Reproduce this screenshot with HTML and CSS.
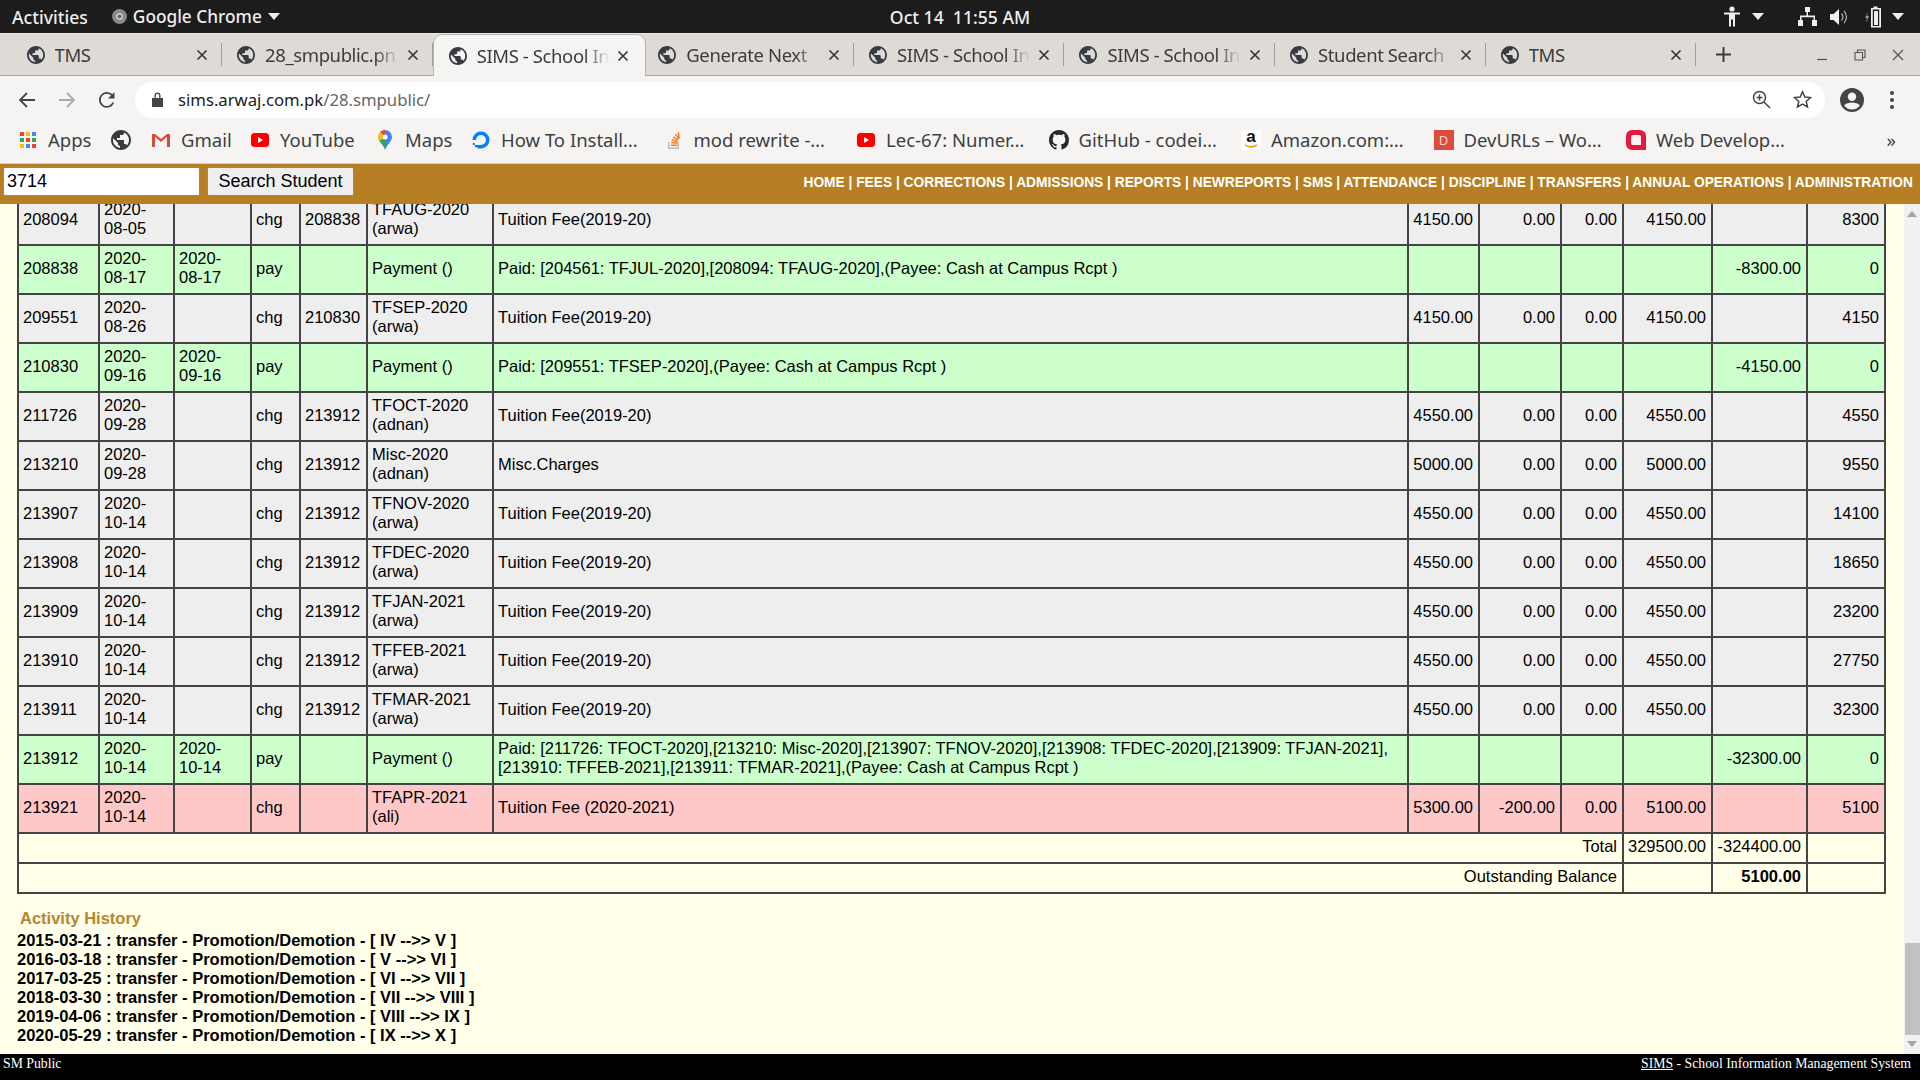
FILE: index.html
```html
<!DOCTYPE html>
<html lang="en">
<head>
    <meta charset="UTF-8">
    <meta name="viewport" content="width=device-width, initial-scale=1.0">
    <title>SIMS - School Information Management System</title>
    <link rel="stylesheet" href="styles.css">
</head>
<body>
    <svg class="icon-defs" width="0" height="0">
        <symbol id="globe" viewBox="2 2 20 20"><path d="M12 2C6.48 2 2 6.48 2 12s4.48 10 10 10 10-4.48 10-10S17.52 2 12 2zm-1 17.93c-3.95-.49-7-3.85-7-7.93 0-.62.08-1.21.21-1.79L9 15v1c0 1.1.9 2 2 2v1.93zm6.9-2.54c-.26-.81-1-1.39-1.9-1.39h-1v-3c0-.55-.45-1-1-1H8v-2h2c.55 0 1-.45 1-1V7h2c1.1 0 2-.9 2-2v-.41c2.93 1.19 5 4.06 5 7.41 0 2.08-.8 3.97-2.1 5.39z"/></symbol>
        <symbol id="close" viewBox="0 0 12 12"><path d="M1.5 1.5l9 9M10.5 1.5l-9 9" fill="none" stroke="currentColor" stroke-width="1.6"/></symbol>
        <symbol id="youtube" viewBox="0 0 20 20"><rect x="1" y="3" width="18" height="14" rx="3.5" fill="#f00"/><path d="M8 7l5 3-5 3z" fill="#fff"/></symbol>
        <symbol id="caret" viewBox="0 0 12 7"><path d="M0 0h12L6 7z" fill="currentColor"/></symbol>
    </svg>

    <div class="topbar">
        <div class="topbar-left">
            <span>Activities</span>
            <span class="app-name">
                <svg width="15" height="15" viewBox="0 0 16 16"><circle cx="8" cy="8" r="8" fill="#8a8a8a"/><circle cx="8" cy="8" r="3.4" fill="#ddd"/><circle cx="8" cy="8" r="2.2" fill="#666"/></svg>
                Google Chrome
                <svg class="caret" width="12" height="7"><use href="#caret"/></svg>
            </span>
        </div>
        <div class="clock">Oct 14&nbsp; 11:55 AM</div>
        <div class="topbar-right">
            <svg class="sys-person" width="16" height="21" viewBox="0 0 16 21"><circle cx="8" cy="3" r="2.6"/><path d="M0 6.5h16v2h-5v12H9v-7H7v7H5v-12H0z"/></svg>
            <svg class="caret sys-caret-a" width="12" height="7"><use href="#caret"/></svg>
            <svg class="sys-net" width="19" height="19" viewBox="0 0 19 19"><path d="M7 0h5v5H10v3.500h7V13h2v6h-5v-6h1.500v-2.700h-12V13H5v6H0v-6h2V8.500h6.500V5H7z"/></svg>
            <svg class="sys-vol" width="19" height="18" viewBox="0 0 19 18"><path d="M0 6h3.500L9 1v16l-5.500-5H0z"/><path d="M11.500 5.500a5 5 0 0 1 0 7M14 3a8.500 8.500 0 0 1 0 12" fill="none" stroke="currentColor" stroke-width="1.200" opacity=".7"/></svg>
            <svg class="sys-bat" width="18" height="22" viewBox="0 0 18 22"><path d="M4 6L1 12h2l-1 5 3-7H3z" opacity=".6"/><path d="M9.500 2V0.500h4V2H17v19.500H7V2zM8.800 3.500v16.500h6.400V3.500z"/><rect x="10" y="5" width="4" height="14"/></svg>
            <svg class="caret sys-caret-b" width="12" height="7"><use href="#caret"/></svg>
        </div>
    </div>

    <div class="tabstrip">
        <div class="tab"><svg class="favicon"><use href="#globe"/></svg><span class="tab-title plain">TMS</span><svg class="tab-close"><use href="#close"/></svg></div>
        <div class="tab"><svg class="favicon"><use href="#globe"/></svg><span class="tab-title">28_smpublic.pn</span><svg class="tab-close"><use href="#close"/></svg></div>
        <div class="tab active"><svg class="favicon"><use href="#globe"/></svg><span class="tab-title">SIMS - School In</span><svg class="tab-close"><use href="#close"/></svg></div>
        <div class="tab"><svg class="favicon"><use href="#globe"/></svg><span class="tab-title">Generate Next</span><svg class="tab-close"><use href="#close"/></svg></div>
        <div class="tab"><svg class="favicon"><use href="#globe"/></svg><span class="tab-title">SIMS - School In</span><svg class="tab-close"><use href="#close"/></svg></div>
        <div class="tab"><svg class="favicon"><use href="#globe"/></svg><span class="tab-title">SIMS - School In</span><svg class="tab-close"><use href="#close"/></svg></div>
        <div class="tab"><svg class="favicon"><use href="#globe"/></svg><span class="tab-title">Student Search</span><svg class="tab-close"><use href="#close"/></svg></div>
        <div class="tab"><svg class="favicon"><use href="#globe"/></svg><span class="tab-title plain">TMS</span><svg class="tab-close"><use href="#close"/></svg></div>
        <svg class="new-tab" width="15" height="15" viewBox="0 0 15 15"><path d="M7.500 0v15M0 7.500h15" fill="none" stroke="currentColor" stroke-width="2"/></svg>
        <div class="window-controls">
            <svg width="12" height="12" viewBox="0 0 12 12"><path d="M1 10.500h10" stroke="currentColor" stroke-width="1.300"/></svg>
            <svg width="12" height="12" viewBox="0 0 12 12"><path d="M1 3.500h7.500V11H1zM3.500 3.500V1H11v7.500H8.500" fill="none" stroke="currentColor" stroke-width="1.100"/></svg>
            <svg width="12" height="12" viewBox="0 0 12 12"><path d="M1 1l10 10M11 1L1 11" fill="none" stroke="currentColor" stroke-width="1.300"/></svg>
        </div>
    </div>

    <div class="toolbar">
        <svg class="nav-btn" width="18" height="18" viewBox="0 0 18 18"><path d="M17 9H2.500M9 2L2 9l7 7" fill="none" stroke="currentColor" stroke-width="1.800"/></svg>
        <svg class="nav-btn disabled" width="18" height="18" viewBox="0 0 18 18"><path d="M1 9h14.500M9 2l7 7-7 7" fill="none" stroke="currentColor" stroke-width="1.800"/></svg>
        <svg class="nav-btn" width="18" height="18" viewBox="0 0 18 18"><path d="M15.300 11.500A7 7 0 1 1 14 4.200" fill="none" stroke="currentColor" stroke-width="1.800"/><path d="M16.500 1v6.500H10z"/></svg>
        <div class="omnibox">
            <svg class="lock" width="11" height="15" viewBox="0 0 11 15"><path d="M0 6h11v9H0zM2.500 6V3.500a3 3 0 0 1 6 0V6H7.200V3.500a1.700 1.700 0 0 0-3.400 0V6z"/></svg>
            <span class="url"><b>sims.arwaj.com.pk</b>/28.smpublic/</span>
            <svg class="omni-zoom" width="19" height="19" viewBox="0 0 19 19"><circle cx="7.500" cy="7.500" r="6" fill="none" stroke="currentColor" stroke-width="1.500"/><path d="M12 12l6 6M7.500 4.500v6M4.500 7.500h6" fill="none" stroke="currentColor" stroke-width="1.500"/></svg>
            <svg class="omni-star" width="19" height="19" viewBox="0 0 19 19"><path d="M9.500 1.800l2.300 5.300 5.700.5-4.300 3.800 1.300 5.600-5-3-5 3 1.300-5.600L1.500 7.600l5.700-.5z" fill="none" stroke="currentColor" stroke-width="1.500"/></svg>
        </div>
        <svg class="avatar" width="24" height="24" viewBox="0 0 24 24"><path d="M12 0a12 12 0 1 0 0 24 12 12 0 0 0 0-24zm0 4.500a4.200 4.200 0 1 1 0 8.400 4.200 4.200 0 0 1 0-8.400zM12 21.500a9.500 9.500 0 0 1-7.800-4.100c1.600-2 5-2.900 7.800-2.900s6.200.9 7.800 2.900a9.500 9.500 0 0 1-7.800 4.100z"/></svg>
        <svg class="menu-dots" width="4" height="18" viewBox="0 0 4 18"><circle cx="2" cy="2" r="2"/><circle cx="2" cy="9" r="2"/><circle cx="2" cy="16" r="2"/></svg>
    </div>

    <div class="bookmarks">
        <span class="bookmark bm-apps">
            <svg class="bm-icon" viewBox="0 0 20 20">
                <rect x="2" y="2" width="4" height="4" fill="#ea4335"/><rect x="8" y="2" width="4" height="4" fill="#fbbc05"/><rect x="14" y="2" width="4" height="4" fill="#4285f4"/>
                <rect x="2" y="8" width="4" height="4" fill="#34a853"/><rect x="8" y="8" width="4" height="4" fill="#ea4335"/><rect x="14" y="8" width="4" height="4" fill="#34a853"/>
                <rect x="2" y="14" width="4" height="4" fill="#fbbc05"/><rect x="8" y="14" width="4" height="4" fill="#4285f4"/><rect x="14" y="14" width="4" height="4" fill="#ea4335"/>
            </svg>
            Apps
        </span>
        <span class="bookmark bm-globe"><svg class="bm-icon globe-bm"><use href="#globe"/></svg></span>
        <span class="bookmark bm-gmail">
            <svg class="bm-icon" viewBox="0 0 20 20"><path d="M1 4h3v13H1z" fill="#d54c3f"/><path d="M16 4h3v13h-3z" fill="#d54c3f"/><path d="M1 4h3l6 5 6-5h3L10 12z" fill="#ea4335"/></svg>
            Gmail
        </span>
        <span class="bookmark bm-youtube"><svg class="bm-icon"><use href="#youtube"/></svg>YouTube</span>
        <span class="bookmark bm-maps">
            <svg class="bm-icon" viewBox="0 0 20 20"><path d="M10 0a7 7 0 0 1 7 7c0 4-4.500 7-7 13z" fill="#4285f4"/><path d="M10 0a7 7 0 0 0-5 2l5 5z" fill="#ea4335"/><path d="M5 2a7 7 0 0 0-2 5c0 1.500.5 2.700 1.300 4L10 7z" fill="#fbbc05"/><path d="M4.300 11C6 13.700 9 16 10 20V7z" fill="#34a853"/><circle cx="10" cy="7" r="2.500" fill="#fff"/></svg>
            Maps
        </span>
        <span class="bookmark bm-long">
            <svg class="bm-icon" viewBox="0 0 20 20"><path d="M10 18.500V15a5 5 0 1 0-5-5H1.500A8.500 8.500 0 1 1 10 18.500z" fill="#0080ff"/><path d="M6.500 15H10v3.500H6.500zM3.800 17.300h2.700v-2.300H3.800zM1.800 15h2v-1.900h-2z" fill="#0080ff"/></svg>
            How To Install…
        </span>
        <span class="bookmark bm-long">
            <svg class="bm-icon" viewBox="0 0 20 20"><path d="M4 12v7h11v-7h-1.500v5.500h-8V12z" fill="#bcbbbb"/><path d="M7 14.500h6v1.500H7zM7.300 11.800l6 .8-.2 1.500-6-.8zM8 9l5.700 2-.5 1.400L7.500 10.400zM9.500 6.300l5 3.300-.8 1.300-5-3.300zM12 3.800l3.600 4.800-1.200.9-3.600-4.800zM15 2l1 5.900-1.500.3-1-6z" fill="#f48024"/></svg>
            mod rewrite -…
        </span>
        <span class="bookmark bm-long"><svg class="bm-icon"><use href="#youtube"/></svg>Lec-67: Numer…</span>
        <span class="bookmark bm-long">
            <svg class="bm-icon" viewBox="0 0 16 16"><path fill="#24292e" d="M8 0C3.580 0 0 3.580 0 8c0 3.540 2.290 6.530 5.470 7.590.4.070.55-.17.55-.38 0-.19-.01-.82-.01-1.490-2.010.37-2.530-.49-2.690-.94-.09-.23-.48-.94-.82-1.130-.28-.15-.68-.52-.01-.53.63-.01 1.080.58 1.230.82.72 1.210 1.870.87 2.330.66.07-.52.28-.87.51-1.070-1.780-.2-3.640-.89-3.640-3.950 0-.87.31-1.590.82-2.150-.08-.2-.36-1.020.08-2.120 0 0 .67-.21 2.200.82.64-.18 1.320-.27 2-.27.68 0 1.360.09 2 .27 1.530-1.040 2.200-.82 2.200-.82.44 1.100.16 1.920.08 2.120.51.56.82 1.270.82 2.150 0 3.070-1.870 3.750-3.650 3.950.29.25.54.73.54 1.480 0 1.070-.01 1.930-.01 2.200 0 .21.15.46.55.38A8.013 8.013 0 0016 8c0-4.420-3.580-8-8-8z"/></svg>
            GitHub - codei…
        </span>
        <span class="bookmark bm-long">
            <span class="bm-icon amazon">a<svg width="14" height="5" viewBox="0 0 14 5"><path d="M1 1c3 2.500 8 2.500 12 0" fill="none" stroke="#f90" stroke-width="1.600"/></svg></span>
            Amazon.com:…
        </span>
        <span class="bookmark bm-long"><span class="bm-icon devurls">D</span>DevURLs – Wo…</span>
        <span class="bookmark">
            <svg class="bm-icon" viewBox="0 0 20 20"><path fill-rule="evenodd" d="M6 0h8a6 6 0 0 1 6 6v14H6a6 6 0 0 1-6-6V6a6 6 0 0 1 6-6zm1 5a2 2 0 0 0-2 2v6a2 2 0 0 0 2 2h8V7a2 2 0 0 0-2-2z" fill="#e8173f"/></svg>
            Web Develop…
        </span>
        <span class="bookmarks-more">»</span>
    </div>

    <div class="site-header">
        <form class="search-form">
            <input class="search-input" type="text" value="3714">
            <button class="search-button" type="button">Search Student</button>
        </form>
        <div class="main-nav">HOME | FEES | CORRECTIONS | ADMISSIONS | REPORTS | NEWREPORTS | SMS | ATTENDANCE | DISCIPLINE | TRANSFERS | ANNUAL OPERATIONS | ADMINISTRATION</div>
    </div>

    <div class="viewport">
        <div class="page">
            <table class="ledger">
                <colgroup>
                    <col class="c-id"><col class="c-date"><col class="c-paid"><col class="c-type"><col class="c-ref"><col class="c-item">
                    <col class="c-desc"><col class="c-amt"><col class="c-disc"><col class="c-adj"><col class="c-net"><col class="c-pay"><col class="c-bal">
                </colgroup>
                <tbody>
                    <tr class="charge"><td>208094</td><td>2020-08-05</td><td></td><td>chg</td><td>208838</td><td>TFAUG-2020 (arwa)</td><td>Tuition Fee(2019-20)</td><td class="num">4150.00</td><td class="num">0.00</td><td class="num">0.00</td><td class="num">4150.00</td><td class="num"></td><td class="num">8300</td></tr>
                    <tr class="payment"><td>208838</td><td>2020-08-17</td><td>2020-08-17</td><td>pay</td><td></td><td>Payment ()</td><td>Paid: [204561: TFJUL-2020],[208094: TFAUG-2020],(Payee: Cash at Campus Rcpt )</td><td class="num"></td><td class="num"></td><td class="num"></td><td class="num"></td><td class="num">-8300.00</td><td class="num">0</td></tr>
                    <tr class="charge"><td>209551</td><td>2020-08-26</td><td></td><td>chg</td><td>210830</td><td>TFSEP-2020 (arwa)</td><td>Tuition Fee(2019-20)</td><td class="num">4150.00</td><td class="num">0.00</td><td class="num">0.00</td><td class="num">4150.00</td><td class="num"></td><td class="num">4150</td></tr>
                    <tr class="payment"><td>210830</td><td>2020-09-16</td><td>2020-09-16</td><td>pay</td><td></td><td>Payment ()</td><td>Paid: [209551: TFSEP-2020],(Payee: Cash at Campus Rcpt )</td><td class="num"></td><td class="num"></td><td class="num"></td><td class="num"></td><td class="num">-4150.00</td><td class="num">0</td></tr>
                    <tr class="charge"><td>211726</td><td>2020-09-28</td><td></td><td>chg</td><td>213912</td><td>TFOCT-2020 (adnan)</td><td>Tuition Fee(2019-20)</td><td class="num">4550.00</td><td class="num">0.00</td><td class="num">0.00</td><td class="num">4550.00</td><td class="num"></td><td class="num">4550</td></tr>
                    <tr class="charge"><td>213210</td><td>2020-09-28</td><td></td><td>chg</td><td>213912</td><td>Misc-2020 (adnan)</td><td>Misc.Charges</td><td class="num">5000.00</td><td class="num">0.00</td><td class="num">0.00</td><td class="num">5000.00</td><td class="num"></td><td class="num">9550</td></tr>
                    <tr class="charge"><td>213907</td><td>2020-10-14</td><td></td><td>chg</td><td>213912</td><td>TFNOV-2020 (arwa)</td><td>Tuition Fee(2019-20)</td><td class="num">4550.00</td><td class="num">0.00</td><td class="num">0.00</td><td class="num">4550.00</td><td class="num"></td><td class="num">14100</td></tr>
                    <tr class="charge"><td>213908</td><td>2020-10-14</td><td></td><td>chg</td><td>213912</td><td>TFDEC-2020 (arwa)</td><td>Tuition Fee(2019-20)</td><td class="num">4550.00</td><td class="num">0.00</td><td class="num">0.00</td><td class="num">4550.00</td><td class="num"></td><td class="num">18650</td></tr>
                    <tr class="charge"><td>213909</td><td>2020-10-14</td><td></td><td>chg</td><td>213912</td><td>TFJAN-2021 (arwa)</td><td>Tuition Fee(2019-20)</td><td class="num">4550.00</td><td class="num">0.00</td><td class="num">0.00</td><td class="num">4550.00</td><td class="num"></td><td class="num">23200</td></tr>
                    <tr class="charge"><td>213910</td><td>2020-10-14</td><td></td><td>chg</td><td>213912</td><td>TFFEB-2021 (arwa)</td><td>Tuition Fee(2019-20)</td><td class="num">4550.00</td><td class="num">0.00</td><td class="num">0.00</td><td class="num">4550.00</td><td class="num"></td><td class="num">27750</td></tr>
                    <tr class="charge"><td>213911</td><td>2020-10-14</td><td></td><td>chg</td><td>213912</td><td>TFMAR-2021 (arwa)</td><td>Tuition Fee(2019-20)</td><td class="num">4550.00</td><td class="num">0.00</td><td class="num">0.00</td><td class="num">4550.00</td><td class="num"></td><td class="num">32300</td></tr>
                    <tr class="payment"><td>213912</td><td>2020-10-14</td><td>2020-10-14</td><td>pay</td><td></td><td>Payment ()</td><td>Paid: [211726: TFOCT-2020],[213210: Misc-2020],[213907: TFNOV-2020],[213908: TFDEC-2020],[213909: TFJAN-2021],<br>[213910: TFFEB-2021],[213911: TFMAR-2021],(Payee: Cash at Campus Rcpt )</td><td class="num"></td><td class="num"></td><td class="num"></td><td class="num"></td><td class="num">-32300.00</td><td class="num">0</td></tr>
                    <tr class="overdue"><td>213921</td><td>2020-10-14</td><td></td><td>chg</td><td></td><td>TFAPR-2021 (ali)</td><td>Tuition Fee (2020-2021)</td><td class="num">5300.00</td><td class="num">-200.00</td><td class="num">0.00</td><td class="num">5100.00</td><td class="num"></td><td class="num">5100</td></tr>
                    <tr class="summary"><td class="num" colspan="10">Total</td><td class="num">329500.00</td><td class="num">-324400.00</td><td></td></tr>
                    <tr class="summary"><td class="num" colspan="10">Outstanding Balance</td><td></td><td class="num"><b>5100.00</b></td><td></td></tr>
                </tbody>
            </table>

            <h3 class="history-title">Activity History</h3>
            <div class="history-list">
                <div>2015-03-21 : transfer - Promotion/Demotion - [ IV --&gt;&gt; V ]</div>
                <div>2016-03-18 : transfer - Promotion/Demotion - [ V --&gt;&gt; VI ]</div>
                <div>2017-03-25 : transfer - Promotion/Demotion - [ VI --&gt;&gt; VII ]</div>
                <div>2018-03-30 : transfer - Promotion/Demotion - [ VII --&gt;&gt; VIII ]</div>
                <div>2019-04-06 : transfer - Promotion/Demotion - [ VIII --&gt;&gt; IX ]</div>
                <div>2020-05-29 : transfer - Promotion/Demotion - [ IX --&gt;&gt; X ]</div>
            </div>
        </div>
        <div class="scrollbar">
            <svg class="scroll-arrow" width="10" height="6" viewBox="0 0 10 6"><path d="M5 0l5 6H0z"/></svg>
            <div class="scroll-thumb"></div>
            <svg class="scroll-arrow" width="10" height="6" viewBox="0 0 10 6"><path d="M0 0h10L5 6z"/></svg>
        </div>
    </div>

    <div class="site-footer">
        <span>SM Public</span>
        <span><a href="#">SIMS</a> - School Information Management System</span>
    </div>
</body>
</html>
```

FILE: styles.css
```css
* {
    box-sizing: border-box;
}
html, body {
    margin: 0;
    padding: 0;
    height: 100%;
    overflow: hidden;
}
body {
    display: flex;
    flex-direction: column;
    font-family: "Liberation Sans", Arial, sans-serif;
    background-color: #ffffea;
}
.icon-defs {
    position: absolute;
}
svg {
    flex: none;
}

/* gnome top bar */
.topbar {
    height: 34px;
    flex: none;
    display: grid;
    grid-template-columns: 1fr auto 1fr;
    align-items: center;
    background-color: #1c1c1c;
    color: #eeeeec;
    font-family: "Noto Sans", sans-serif;
    font-size: 17.6px;
    font-weight: 500;
    border-bottom: 1px solid #e8e8e8;
}
.topbar-left {
    display: flex;
    align-items: center;
    padding-left: 12px;
}
.app-name {
    display: flex;
    align-items: center;
    gap: 6px;
    margin-left: 24px;
    font-size: 17.3px;
}
.topbar-right {
    display: flex;
    align-items: center;
    fill: #eeeeec;
    color: #eeeeec;
}
.sys-person {
    margin-left: auto;
}
.sys-caret-a {
    margin-left: 12px;
}
.sys-net {
    margin-left: 34px;
}
.sys-vol {
    margin-left: 13px;
}
.sys-bat {
    margin-left: 15px;
}
.sys-caret-b {
    margin: 0 16px 0 10px;
}

/* chrome tabs */
.tabstrip {
    height: 42px;
    flex: none;
    display: flex;
    align-items: stretch;
    padding-left: 11.5px;
    background-color: #dedbd7;
    border-bottom: 1px solid #a9a7a4;
    color: #3c3c3c;
    font-family: "Noto Sans", sans-serif;
}
.tab {
    width: 210.6px;
    flex: none;
    display: flex;
    align-items: center;
    padding: 0 14px 0 15px;
    position: relative;
    font-size: 18.5px;
}
.tab::after {
    content: "";
    position: absolute;
    right: 0;
    top: 9px;
    bottom: 9px;
    width: 1px;
    background-color: #a09e9b;
}
.tab.active {
    width: 213.6px;
    margin-right: -3px;
    background-color: #f5f4f2;
    border-radius: 9px 9px 0 0;
    border: 1px solid #b5b3b0;
    border-bottom: none;
    height: 42px;
    z-index: 1;
}
.tab.active::after {
    display: none;
}
.tab.active .tab-close {
    margin-right: 2px;
}
.favicon {
    width: 18px;
    height: 18px;
    fill: #383c40;
}
.tab-title {
    flex: 1;
    min-width: 0;
    margin-left: 10px;
    letter-spacing: -0.4px;
    white-space: nowrap;
    overflow: hidden;
    -webkit-mask-image: linear-gradient(to right, #000 78%, transparent 96%);
    mask-image: linear-gradient(to right, #000 78%, transparent 96%);
}
.tab-title.plain {
    -webkit-mask-image: none;
    mask-image: none;
}
.tab-close {
    width: 12px;
    height: 12px;
    margin-left: 2px;
    color: #333;
}
.new-tab {
    align-self: center;
    margin-left: 20px;
}
.window-controls {
    margin-left: auto;
    display: flex;
    align-items: center;
    gap: 26px;
    padding-right: 16px;
    color: #555;
}

/* chrome toolbar */
.toolbar {
    height: 43px;
    flex: none;
    display: flex;
    align-items: center;
    background-color: #f5f4f2;
    padding: 4px 0 0 18px;
    color: #444;
    fill: #444;
}
.nav-btn {
    margin-right: 22px;
}
.nav-btn.disabled {
    color: #aaa;
}
.omnibox {
    width: 1690px;
    height: 36px;
    display: flex;
    align-items: center;
    margin-left: -3px;
    padding: 0 13px 0 17px;
    background-color: #fff;
    border-radius: 18px;
}
.lock {
    fill: #444;
}
.url {
    margin-left: 15px;
    font-family: "Noto Sans", sans-serif;
    font-size: 16.7px;
    color: #666;
}
.url b {
    font-weight: normal;
    color: #202124;
}
.omni-zoom {
    margin-left: auto;
    color: #444;
}
.omni-star {
    margin-left: 22px;
    color: #444;
}
.avatar {
    margin-left: 15px;
}
.menu-dots {
    margin-left: 26px;
}

/* bookmarks */
.bookmarks {
    height: 45px;
    flex: none;
    display: flex;
    align-items: center;
    padding: 0 0 3px 18px;
    background-color: #f5f4f2;
    border-bottom: 1px solid #cfcfcf;
    color: #3c4043;
    font-family: "Noto Sans", sans-serif;
    font-size: 18.5px;
    white-space: nowrap;
}
.bookmark {
    flex: none;
    display: flex;
    align-items: center;
    gap: 10px;
}
.bm-apps { width: 93px; }
.bm-globe { width: 40px; }
.bm-gmail { width: 99px; }
.bm-youtube { width: 125px; }
.bm-maps { width: 96px; }
.bm-long { width: 192.5px; }
.bm-icon {
    width: 20px;
    height: 20px;
    flex: none;
}
.globe-bm {
    fill: #383c40;
}
.amazon {
    display: flex;
    flex-direction: column;
    align-items: center;
    background-color: #fff;
    border-radius: 3px;
    color: #111;
    font-family: "Liberation Sans", sans-serif;
    font-size: 17px;
    font-weight: bold;
    line-height: 14px;
}
.amazon svg {
    display: block;
}
.devurls {
    display: flex;
    align-items: center;
    justify-content: center;
    background-color: #dd4b3e;
    color: #f4d4cf;
    font-size: 13px;
}
.bookmarks-more {
    margin-left: auto;
    padding-right: 24px;
}

/* site header */
.site-header {
    height: 40px;
    flex: none;
    display: flex;
    align-items: center;
    justify-content: space-between;
    background-color: #b67f24;
    padding: 0 7px 6px 3px;
}
.search-form {
    display: flex;
    gap: 7px;
}
.search-input {
    width: 197px;
    height: 29px;
    padding: 0 3px;
    border: 1px solid #8a8a8a;
    border-radius: 2px;
    background-color: #fff;
    color: #000;
    font-family: "Liberation Sans", sans-serif;
    font-size: 18px;
}
.search-button {
    width: 147px;
    height: 29px;
    padding: 0;
    border: 1px solid #8a8a8a;
    border-radius: 2px;
    background-color: #efefef;
    color: #000;
    font-family: "Liberation Sans", sans-serif;
    font-size: 18px;
}
.main-nav {
    padding-top: 2px;
    color: #fff;
    font-size: 13.75px;
    font-weight: bold;
    white-space: nowrap;
}

/* page body */
.viewport {
    flex: 1;
    min-height: 0;
    display: flex;
    overflow: hidden;
}
.page {
    flex: 1;
    min-width: 0;
    padding-left: 17px;
    color: #000;
    font-size: 16.5px;
    line-height: 19px;
}
.ledger {
    width: 1868px;
    margin-top: -9px;
    border-collapse: collapse;
    table-layout: fixed;
}
.ledger td {
    padding: 3px 5px 6px 4px;
    border: 2px solid #444;
    vertical-align: middle;
}
.ledger .num {
    text-align: right;
}
.c-id { width: 81px; }
.c-date { width: 75px; }
.c-paid { width: 77px; }
.c-type { width: 49px; }
.c-ref { width: 67px; }
.c-item { width: 126px; }
.c-desc { width: 915px; }
.c-amt { width: 71px; }
.c-disc { width: 82px; }
.c-adj { width: 62px; }
.c-net { width: 89px; }
.c-pay { width: 95px; }
.c-bal { width: 78px; }
.charge {
    background-color: #eeeeee;
}
.payment {
    background-color: #ccffcc;
}
.overdue {
    background-color: #ffc8c8;
}
.history-title {
    margin: 15px 0 3px 3px;
    color: #b8862f;
    font-size: 16.5px;
    line-height: 19px;
}
.history-list {
    font-weight: bold;
}

/* scrollbar */
.scrollbar {
    width: 16px;
    flex: none;
    display: flex;
    flex-direction: column;
    align-items: center;
    background-color: #f1f1f1;
    fill: #a3a3a3;
    padding: 7px 0 7px;
}
.scroll-thumb {
    width: 15px;
    height: 92px;
    margin-top: auto;
    margin-bottom: 6px;
    background-color: #c1c1c1;
}

/* footer */
.site-footer {
    height: 26px;
    flex: none;
    display: flex;
    justify-content: space-between;
    padding: 0 9px 6px 3px;
    align-items: center;
    background-color: #000;
    color: #fff;
    font-family: "Liberation Serif", serif;
    font-size: 13.75px;
}
.site-footer a {
    color: #fff;
}
```
